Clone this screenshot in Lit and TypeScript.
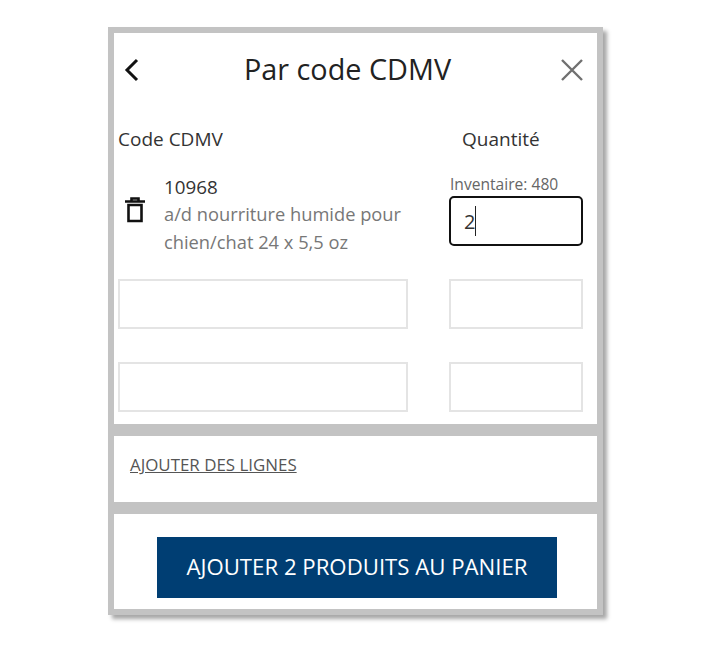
import { LitElement, html, css } from 'lit';
import { customElement } from 'lit/decorators.js';

@customElement('app-root')
export class AppRoot extends LitElement {
  static styles = css`
    :host {
      display: block;
      width: 720px;
      height: 650px;
      background: #fff;
      font-family: 'Open Sans', sans-serif;
      color: #222;
      padding: 27px 0 0 108px;
      box-sizing: border-box;
    }

    .frame {
      width: 483px;
      display: flex;
      flex-direction: column;
      gap: 12px;
      background: #c3c3c3;
      border: 6px solid #c3c3c3;
      box-shadow: 4px 4px 4px rgba(0, 0, 0, 0.35);
    }

    .panel {
      background: #fff;
    }

    .main {
      height: 391px;
      box-sizing: border-box;
      padding: 0 14px 0 4px;
    }

    .head {
      height: 73px;
      display: flex;
      align-items: center;
      justify-content: space-between;
      position: relative;
    }

    .head svg {
      display: block;
    }

    .back {
      margin-left: 2px;
    }

    .close {
      margin-right: -2px;
    }

    .title {
      font-size: 28.800px;
      line-height: 36px;
      position: absolute;
      left: 126px;
      top: 18px;
      color: #222;
    }

    .grid {
      display: grid;
      grid-template-columns: 290px 134px;
      column-gap: 41px;
    }

    .label {
      font-size: 19px;
      line-height: 24px;
      margin-top: 21px;
      height: 24px;
      color: #333;
    }

    .label.qty {
      padding-left: 13px;
    }

    .item {
      display: flex;
      align-items: center;
      height: 88px;
      margin-top: 20px;
    }

    .trash {
      margin: 0 19px 10px 7px;
      flex: none;
    }

    .code {
      font-size: 18.800px;
      line-height: 24px;
      margin-bottom: 1px;
      color: #333;
    }

    .desc {
      font-size: 18.300px;
      line-height: 28px;
      color: #777;
      width: 255px;
    }

    .stock {
      font-size: 15.600px;
      line-height: 18px;
      color: #666;
      margin-top: 24px;
      padding-left: 1px;
    }

    .field {
      box-sizing: border-box;
      height: 50px;
      border: 2px solid #e4e4e4;
      background: #fff;
    }

    .field.active {
      border-color: #111;
      border-radius: 5px;
      margin-top: 3px;
      display: flex;
      align-items: center;
      padding-left: 13px;
      font-size: 20px;
      color: #333;
    }

    .caret {
      width: 1px;
      height: 30px;
      background: #222;
    }

    .first {
      margin-top: 20px;
    }

    .row {
      margin-top: 33px;
    }

    .links {
      height: 66px;
      box-sizing: border-box;
      padding: 17px 0 0 16px;
    }

    .links a {
      font-size: 16.900px;
      line-height: 24px;
      color: #555;
      text-decoration: underline;
    }

    .footer {
      height: 95px;
      box-sizing: border-box;
      padding: 23px 0 0 43px;
    }

    .submit {
      display: block;
      width: 400px;
      height: 61px;
      border: 0;
      padding: 0 0 3px;
      background: #003e73;
      color: #fff;
      font-family: inherit;
      font-size: 22.200px;
    }
  `;

  render() {
    return html`
      <div class="frame">
        <section class="panel main">
          <div class="head">
            <svg class="back" width="26" height="26" viewBox="0 0 26 26" fill="none" stroke="#111" stroke-width="3">
              <path d="M17 3 L7 13 L17 23"></path>
            </svg>
            <div class="title">Par code CDMV</div>
            <svg class="close" width="26" height="26" viewBox="0 0 26 26" fill="none" stroke="#707070" stroke-width="2.400">
              <path d="M3 3 L23 23 M23 3 L3 23"></path>
            </svg>
          </div>
          <div class="grid">
            <div class="label">Code CDMV</div>
            <div class="label qty">Quantité</div>
            <div class="item">
              <svg class="trash" width="20" height="26" viewBox="0 0 20 26" fill="none" stroke="#111" stroke-width="2.600">
                <path d="M0 4.500 H20 M6.500 4.500 V1.500 H13.500 V4.500 M3.500 8 V24 H16.500 V8 Z"></path>
              </svg>
              <div>
                <div class="code">10968</div>
                <div class="desc">a/d nourriture humide pour chien/chat 24 x 5,5 oz</div>
              </div>
            </div>
            <div>
              <div class="stock">Inventaire: 480</div>
              <div class="field active">2<span class="caret"></span></div>
            </div>
            <div class="field first"></div>
            <div class="field first"></div>
            <div class="field row"></div>
            <div class="field row"></div>
          </div>
        </section>
        <section class="panel links"><a href="#">AJOUTER DES LIGNES</a></section>
        <section class="panel footer">
          <button class="submit">AJOUTER 2 PRODUITS AU PANIER</button>
        </section>
      </div>
    `;
  }
}
